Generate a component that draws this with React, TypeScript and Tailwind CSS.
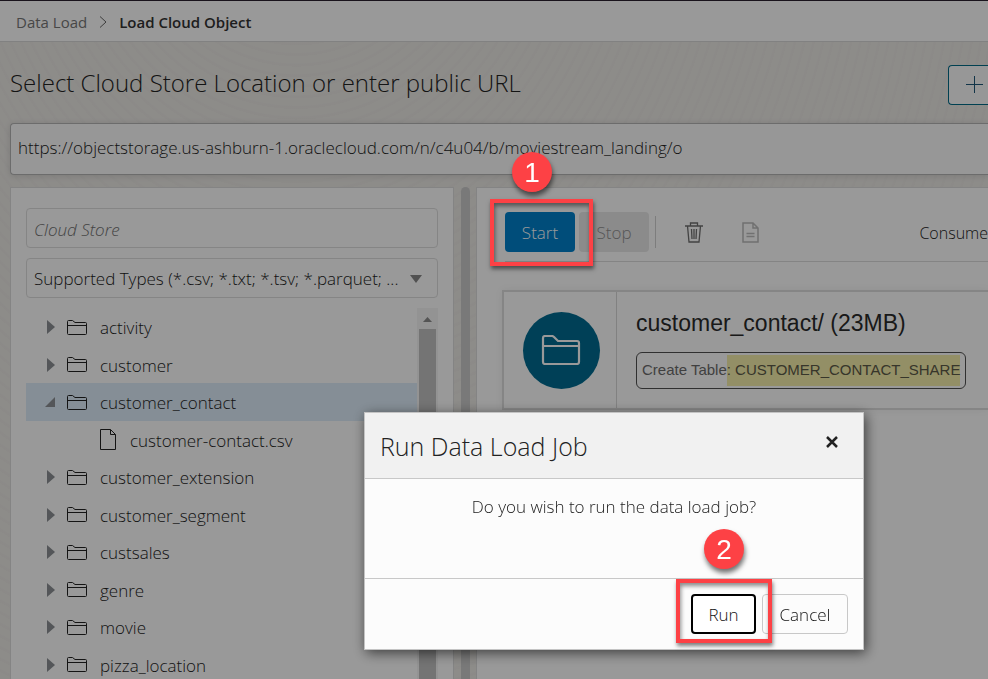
import React from "react";

type TreeItem = { name: string; kind: "folder" | "open" | "file" };

const items: TreeItem[] = [
  { name: "activity", kind: "folder" },
  { name: "customer", kind: "folder" },
  { name: "customer_contact", kind: "open" },
  { name: "customer-contact.csv", kind: "file" },
  { name: "customer_extension", kind: "folder" },
  { name: "customer_segment", kind: "folder" },
  { name: "custsales", kind: "folder" },
  { name: "genre", kind: "folder" },
  { name: "movie", kind: "folder" },
  { name: "pizza_location", kind: "folder" },
];

function FolderIcon({ className }: { className: string }) {
  return (
    <svg viewBox="0 0 20 15" className={className} fill="none" stroke="currentColor" strokeLinejoin="round" aria-hidden="true">
      <path d="M0.5 13.5V1.5Q0.5 0.5 1.5 0.5H5.5L8 2.5H18.5Q19.5 2.5 19.5 3.5V13.5Q19.5 14.5 18.5 14.5H1.5Q0.5 14.5 0.5 13.5ZM0.5 5.5H19.5" />
    </svg>
  );
}

function LargeFolderIcon() {
  return (
    <svg viewBox="0 0 40 30" className="h-[30px] w-10" fill="none" stroke="#fff" strokeWidth="2.2" aria-hidden="true">
      <path d="M2 27V3Q2 1 4 1H11Q12 1 13 2L17 6H36Q38 6 38 8V27Q38 29 36 29H4Q2 29 2 27ZM2 11H38" />
    </svg>
  );
}

function FileIcon() {
  return (
    <svg viewBox="0 0 16 21" className="h-[21px] w-4" fill="none" stroke="currentColor" aria-hidden="true">
      <path d="M0.5 0.5H10.5L15.5 5.5V20.5H0.5ZM10.5 0.5V5.5H15.5" />
    </svg>
  );
}

function Twisty({ open }: { open: boolean }) {
  return (
    <svg viewBox="0 0 10 14" className="h-3.5 w-2.5 overflow-visible" fill="#8c9094" aria-hidden="true">
      {open ? <path d="M9 2V12H-1Z" /> : <path d="M1 0L9 7L1 14Z" />}
    </svg>
  );
}

function Badge({ n, className }: { n: number; className: string }) {
  return (
    <span
      className={`absolute z-30 flex h-10 w-10 items-center justify-center rounded-full bg-[#fd4145] pt-0.5 font-['Liberation_Sans',Arial,sans-serif] text-[28px] font-normal leading-none text-white shadow-[1px_4px_5px_rgba(0,0,0,0.55)] ${className}`}
    >
      {n}
    </span>
  );
}

function Frame({ className }: { className: string }) {
  return (
    <span
      className={`pointer-events-none absolute z-30 border-4 border-[#fd4145] shadow-[1px_3px_4px_rgba(0,0,0,0.5),inset_1px_3px_4px_rgba(0,0,0,0.45)] ${className}`}
    />
  );
}

function Tree() {
  return (
    <div className="mt-2.5 flex min-h-0 flex-1">
      <ul className="min-w-0 flex-1 overflow-hidden">
        {items.map((item) => (
          <li
            key={item.name}
            className={`flex items-center odd:h-[38px] even:h-[37px] ${item.kind === "open" ? "bg-[#deedfa]" : ""} ${
              item.kind === "file" ? "pl-[74px]" : "pl-5"
            }`}
          >
            {item.kind === "file" ? (
              <FileIcon />
            ) : (
              <>
                <Twisty open={item.kind === "open"} />
                <FolderIcon className="ml-[11px] h-[15px] w-5" />
              </>
            )}
            <span className={item.kind === "file" ? "ml-3.5 pt-0.5" : "ml-[13px] pt-0.5"}>{item.name}</span>
          </li>
        ))}
      </ul>
      <div className="flex w-[21px] flex-col items-center bg-[#f5f5f5]">
        <svg viewBox="0 0 21 21" className="h-[21px] w-[21px] shrink-0" fill="#8c8c8c" aria-hidden="true">
          <path d="M6 14L10.5 9L15 14Z" />
        </svg>
        <div className="w-[17px] flex-1 bg-[#c1c1c1]" />
      </div>
    </div>
  );
}

function JobPanel() {
  return (
    <section className="min-w-0 flex-1 border-t border-l border-[#dcdcdc] bg-white pl-[25px]">
      <div className="ml-[3px] flex h-[74px] items-center border-b border-[#dcdcdc] pt-[15px]">
        <div className="relative">
          <button className="h-10 w-[70px] rounded-sm bg-[#0080cc] pt-0.5 text-white">Start</button>
          <Frame className="-left-[15px] -top-[13px] h-[67px] w-[103px]" />
          <Badge n={1} className="left-[7px] -top-[60px]" />
        </div>
        <button disabled className="ml-1 h-10 w-[70px] rounded-sm bg-[#e8e8e8] pt-0.5 text-[#909090]">
          Stop
        </button>
        <div className="ml-1.5 h-8 w-px bg-[#d0d0d0]" />
        <button aria-label="Delete" className="ml-[29px] text-[#707070]">
          <svg viewBox="0 0 18 21" className="h-[21px] w-[18px]" fill="none" stroke="currentColor" strokeWidth="1.3">
            <path d="M0 4H18M5.5 4V1H12.5V4M2.5 4L4 20H14L15.5 4M6.5 7L7 17M9 7V17M11.5 7L11 17" />
          </svg>
        </button>
        <button aria-label="View log" disabled className="ml-[39px] text-[#bcbcbc]">
          <svg viewBox="0 0 17 21" className="h-[21px] w-[17px]" fill="none" stroke="currentColor" strokeWidth="1.5">
            <path d="M1 1H11L16 6V20H1ZM11 1V6H16M4.5 11.5H12.5M4.5 14.5H12.5" />
          </svg>
        </button>
        <span className="ml-auto pt-0.5 text-base">Consume</span>
      </div>

      <article className="mt-7 flex h-[120px] border-2 border-r-0 border-[#dedede] shadow-[0_0_8px_rgba(0,0,0,0.06)]">
        <div className="flex w-[113px] items-center justify-center border-r border-[#d8d8d8] pl-0.5">
          <div className="flex h-[77px] w-[77px] items-center justify-center rounded-full bg-[#006c91]">
            <LargeFolderIcon />
          </div>
        </div>
        <div className="pl-[19px] pt-[15px] font-['Liberation_Sans',Arial,sans-serif] font-normal">
          <h2 className="text-[23px] leading-8 text-[#2b2b2b]">customer_contact/ (23MB)</h2>
          <div className="mt-[13px] flex h-[37px] items-center whitespace-nowrap rounded-md border border-[#505050] px-[5px] text-[15px] text-[#6c6c6c]">
            Create Table
            <span className="flex h-[31px] items-center whitespace-pre bg-[#f6efaa] text-[#5c5a48]">: CUSTOMER_CONTACT_SHARE</span>
          </div>
        </div>
      </article>
    </section>
  );
}

function RunDialog() {
  return (
    <div
      role="dialog"
      aria-labelledby="dialog-title"
      className="fixed left-[364px] top-[412px] z-20 w-[500px] border border-[#c4c4c4] bg-[#fcfcfc] text-[#222] shadow-[2px_3px_12px_rgba(0,0,0,0.6)]"
    >
      <header className="flex h-[66px] items-center justify-between border-b border-[#c8c8c8] bg-[#f1f1f1] pl-[15px] pr-[25px]">
        <h2 id="dialog-title" className="pt-0.5 text-[25px]">
          Run Data Load Job
        </h2>
        <button aria-label="Close" className="-mt-2">
          <svg viewBox="0 0 12 12" className="h-3 w-3" stroke="#222" strokeWidth="2.5">
            <path d="M1 1L11 11M11 1L1 11" />
          </svg>
        </button>
      </header>
      <p className="h-[99px] pt-4 text-center leading-6">Do you wish to run the data load job?</p>
      <footer className="flex h-[71px] items-center justify-end gap-1.5 border-t border-[#c8c8c8] pr-[15px] text-[#111]">
        <div className="relative">
          <button className="h-10 w-[65px] rounded border-2 border-black bg-white pt-0.5">Run</button>
          <Frame className="-left-[15px] -top-[15px] h-16 w-24" />
          <Badge n={2} className="left-[13px] -top-[65px]" />
        </div>
        <button className="h-10 w-[86px] rounded-sm border border-[#c8c8c8] pt-0.5">Cancel</button>
      </footer>
    </div>
  );
}

export default function App() {
  return (
    <div className="relative flex h-screen flex-col overflow-hidden border-t border-[#2a2030] bg-[#ebe9e5] bg-[repeating-radial-gradient(ellipse_at_30%_-20%,transparent_0_6px,rgba(90,90,90,0.015)_7px_9px)] font-['Open_Sans','Noto_Sans',sans-serif] text-[17px] font-light text-[#222]">
      <nav aria-label="Breadcrumb" className="flex h-[41px] shrink-0 items-center gap-3 border-b border-[#d8d8d8] bg-white pl-4 pt-0.5 text-[15px]">
        <a href="#data-load" className="font-normal text-[#777]">
          Data Load
        </a>
        <svg viewBox="0 0 8 12" className="h-3 w-2" fill="none" stroke="#666" aria-hidden="true">
          <path d="M1 0.5L7 6L1 11.5" />
        </svg>
        <span className="font-semibold text-[#333]">Load Cloud Object</span>
      </nav>

      <main className="flex min-h-0 flex-1 flex-col pl-2.5">
        <div className="flex h-[81px] items-center justify-between">
          <h1 className="text-2xl">Select Cloud Store Location or enter public URL</h1>
          <button aria-label="Add cloud store location" className="mt-1 h-10 w-10 rounded-l-sm border border-r-0 border-[#006c88] bg-[#fcfcfc] pl-[17px] text-[#1f5878]">
            <svg viewBox="0 0 17 17" className="h-[17px] w-[17px]" stroke="currentColor">
              <path d="M0 8.5H17M8.5 0V17" />
            </svg>
          </button>
        </div>
        <input
          aria-label="Cloud store URL"
          readOnly
          defaultValue="https://objectstorage.us-ashburn-1.oraclecloud.com/n/c4u04/b/moviestream_landing/o"
          className="h-[52px] w-full shrink-0 rounded-l-sm border border-r-0 border-[#b4b4b4] bg-[#fcfcfc] px-[7px] pb-1 shadow-[0_1px_6px_rgba(0,0,0,0.12)] outline-none"
        />
        <div className="mt-3 flex min-h-0 flex-1">
          <aside className="flex w-[444px] shrink-0 flex-col border border-b-0 border-[#dcdcdc] bg-white px-[15px] pt-5">
            <input
              aria-label="Cloud Store"
              placeholder="Cloud Store"
              className="h-10 shrink-0 rounded-sm border border-[#dedede] px-[7px] pt-0.5 outline-none placeholder:italic placeholder:text-[#707070]"
            />
            <div className="relative mt-2.5 flex shrink-0">
              <select
                aria-label="File types"
                className="h-10 w-full appearance-none rounded-sm border border-[#dedede] bg-white pl-[7px] pr-9 pt-0.5 outline-none"
              >
                <option>Supported Types (*.csv; *.txt; *.tsv; *.parquet; ...</option>
              </select>
              <svg viewBox="0 0 12 8" className="pointer-events-none absolute right-4 top-[17px] h-2 w-3" fill="#888" aria-hidden="true">
                <path d="M0 0H12L6 8Z" />
              </svg>
            </div>
            <Tree />
          </aside>
          <div role="separator" aria-orientation="vertical" className="ml-[7px] mr-1.5 w-[9px] shrink-0 rounded-t-full bg-[#cacaca]" />
          <JobPanel />
        </div>
      </main>

      <div className="fixed inset-0 z-10 bg-black/40" />
      <RunDialog />
    </div>
  );
}
